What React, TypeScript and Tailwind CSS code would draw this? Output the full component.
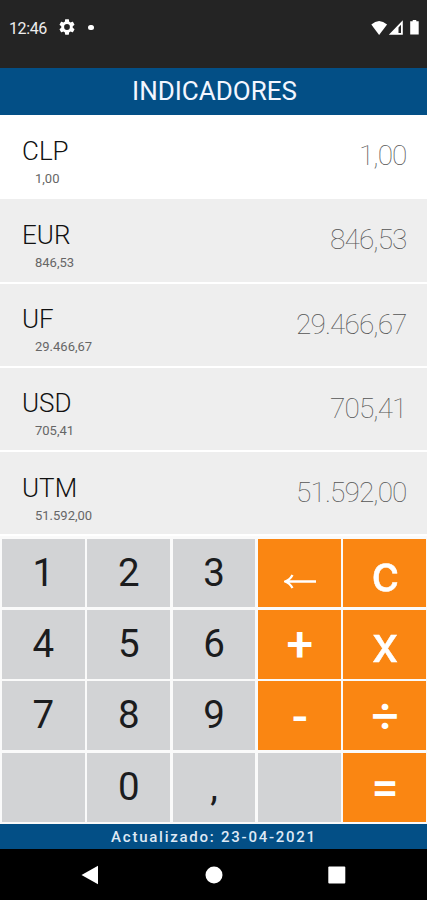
const rates = [
  { code: "CLP", value: "1,00" },
  { code: "EUR", value: "846,53" },
  { code: "UF", value: "29.466,67" },
  { code: "USD", value: "705,41" },
  { code: "UTM", value: "51.592,00" },
];

const keys = [
  "1", "2", "3", "←", "c",
  "4", "5", "6", "+", "x",
  "7", "8", "9", "-", "÷",
  "", "0", ",", "", "=",
];

function StatusBar() {
  return (
    <div className="flex h-[67.5px] items-start bg-[#242424] pt-[17px] pr-[7px] pl-[9px] text-white">
      <span className="w-[39px] pt-px text-[16px] leading-[21px] tracking-[-0.4px] text-[#eee]">12:46</span>
      <svg className="mt-[2px] ml-[11px]" width="16" height="16" viewBox="2 2 20 20" fill="#fff">
        <path d="M19.14 12.94c.04-.3.06-.61.06-.94 0-.32-.02-.64-.07-.94l2.03-1.58c.18-.14.23-.41.12-.61l-1.92-3.32c-.12-.22-.37-.29-.59-.22l-2.39.96c-.5-.38-1.03-.7-1.62-.94l-.36-2.54c-.04-.24-.24-.41-.48-.41h-3.84c-.24 0-.43.17-.47.41l-.36 2.54c-.59.24-1.13.57-1.62.94l-2.39-.96c-.22-.08-.47 0-.59.22L2.74 8.87c-.12.21-.08.47.12.61l2.03 1.58c-.05.3-.09.63-.09.94s.02.64.07.94l-2.03 1.58c-.18.14-.23.41-.12.61l1.92 3.32c.12.22.37.29.59.22l2.39-.96c.5.38 1.03.7 1.62.94l.36 2.54c.05.24.24.41.48.41h3.84c.24 0 .44-.17.47-.41l.36-2.54c.59-.24 1.13-.56 1.62-.94l2.39.96c.22.08.47 0 .59-.22l1.92-3.32c.12-.22.07-.47-.12-.61l-2.01-1.58zM12 15.6A3.6 3.6 0 1 1 12 8.4a3.6 3.6 0 0 1 0 7.2z" />
      </svg>
      <span className="mt-[7.5px] ml-[13px] size-[5.5px] rounded-full bg-white" />
      <svg className="mt-[3px] ml-auto" width="50" height="16" viewBox="0 0 50 16" fill="#fff">
        <path d="M9.1 15 1.3 4.5Q9.1-2.6 17.1 4.5Z" />
        <path fillRule="evenodd" d="M32.8.3V14.7H18.8ZM31 4.8 28.5 7.5V13H31Z" />
        <path d="M40.2 1.3H42.7V.1H46.3V1.3H48.7V14.5H40.2Z" />
      </svg>
    </div>
  );
}

function RateRow({ code, value, active }: { code: string; value: string; active: boolean }) {
  return (
    <div
      className={`flex h-[84.25px] justify-between border-b-[2.5px] border-white pr-[20.5px] pl-[22px] ${
        active ? "bg-white" : "bg-[#eee]"
      }`}
    >
      <div>
        <div className="mt-[20.5px] text-[26px] leading-[30px] font-light text-[#111]">{code}</div>
        <div className="mt-[5px] ml-[13px] text-[13px] leading-[16px] text-[#666]">{value}</div>
      </div>
      <div className="mt-[25px] text-[28px] leading-[32px] font-thin tracking-[-0.9px] text-[#555]">{value}</div>
    </div>
  );
}

function keyStyle(label: string, column: number) {
  if (column < 3 || label === "") return "bg-[#d2d3d5] text-[38.5px] text-[#1b1c1e]";
  if (label === "c" || label === "x")
    return "bg-[#fa8612] pt-[2px] pl-px text-[52px] text-white [-webkit-text-stroke:0.5px_white]";
  return "bg-[#fa8612] pt-[2px] pl-px text-[48px] font-medium text-white";
}

function Key({ label, column }: { label: string; column: number }) {
  return (
    <button className={`flex items-center justify-center leading-none ${keyStyle(label, column)}`}>
      {label === "←" ? (
        <svg className="mt-[15px]" width="32" height="15" viewBox="0 0 32 15" fill="none" stroke="#fff" strokeWidth="2.3">
          <path d="M1.5 7.5H32M8.5 1Q6 5.8 1 7.5Q6 9.2 8.5 14" />
        </svg>
      ) : (
        label
      )}
    </button>
  );
}

export default function App() {
  return (
    <div className="flex h-[900px] w-[427px] flex-col overflow-hidden bg-[#fafafa] font-['Roboto',sans-serif]">
      <StatusBar />
      <header className="flex h-[47.5px] items-center justify-center bg-[#034f86] pt-px pl-[2px] text-[26px] text-[#f3f6ff]">
        INDICADORES
      </header>
      <main className="h-[421.5px]">
        {rates.map((rate, i) => (
          <RateRow key={rate.code} code={rate.code} value={rate.value} active={i === 0} />
        ))}
      </main>
      <section className="grid h-[287px] grid-cols-5 grid-rows-[repeat(4,minmax(0,1fr))] gap-[2.5px] pt-[2px] pr-px pb-[2px] pl-[2px]">
        {keys.map((label, i) => (
          <Key key={i} label={label} column={i % 5} />
        ))}
      </section>
      <footer className="flex h-[25.5px] items-center justify-center bg-[#034f86] pt-[2px] pl-px text-[15px] font-medium tracking-[1.75px] text-[#dfe9f5]">
        Actualizado: 23-04-2021
      </footer>
      <nav className="flex h-[51px] items-center bg-black pl-[81px]">
        <svg width="265" height="20" viewBox="0 0 265 20" fill="#fff">
          <path d="M.5 10 17 .8V19.2Z" />
          <circle cx="133" cy="10" r="8.5" />
          <rect x="247.3" y="1.5" width="17" height="17" rx="1" />
        </svg>
      </nav>
    </div>
  );
}
